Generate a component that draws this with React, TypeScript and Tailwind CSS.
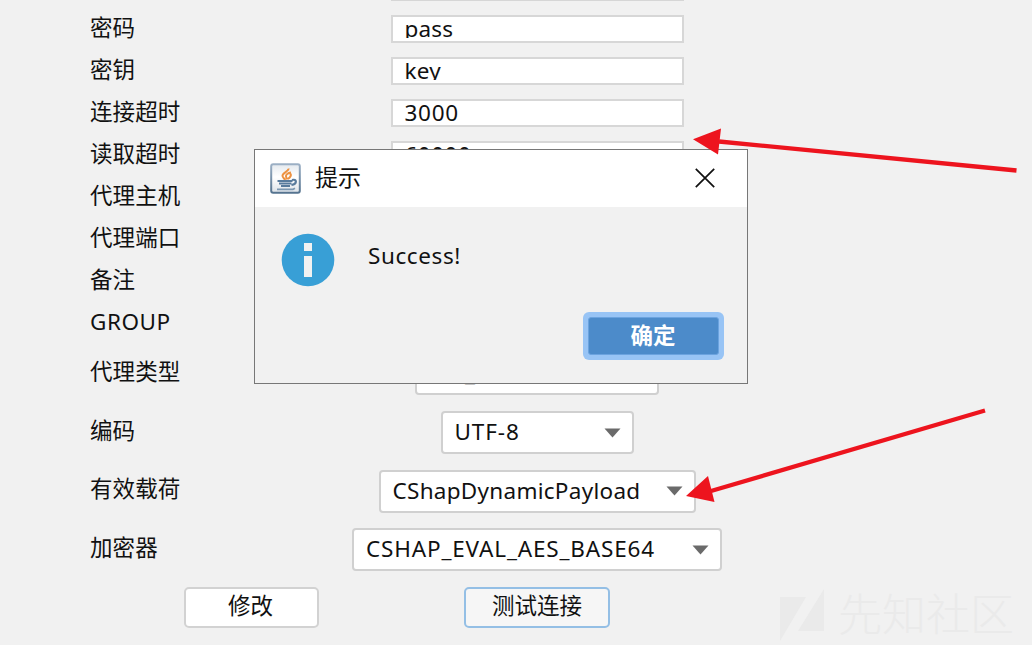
import type { ReactNode } from "react";

const textFields = [
  { label: "密码", value: "pass", spacing: "tracking-[0.2px]" },
  { label: "密钥", value: "key", spacing: "tracking-[0.2px]" },
  { label: "连接超时", value: "3000", spacing: "tracking-[0.7px]" },
  { label: "读取超时", value: "60000", spacing: "tracking-[0.5px]" },
  { label: "代理主机", value: "", spacing: "" },
  { label: "代理端口", value: "", spacing: "" },
  { label: "备注", value: "", spacing: "" },
  { label: "GROUP", value: "", spacing: "" },
];

const selects = [
  { label: "代理类型", value: "NO_PROXY", row: "h-[59px]", width: "w-[244px]", spacing: "tracking-[0.7px]" },
  { label: "编码", value: "UTF-8", row: "h-[59px]", width: "w-[193px]", spacing: "tracking-[0.9px]" },
  { label: "有效载荷", value: "CShapDynamicPayload", row: "h-[58px]", width: "w-[317px]", spacing: "tracking-[0.28px]" },
  { label: "加密器", value: "CSHAP_EVAL_AES_BASE64", row: "h-[59px]", width: "w-[370px]", spacing: "tracking-[0.84px]" },
];

function Row({ label, height, labelClass, children }: { label: string; height: string; labelClass: string; children: ReactNode }) {
  return (
    <div className={`grid grid-cols-[252px_390px] items-center ${height}`}>
      <span className={`leading-[30px] ${labelClass}`}>{label}</span>
      <div className="flex justify-center">{children}</div>
    </div>
  );
}

function JavaIcon() {
  return (
    <svg width="31" height="31" viewBox="0 0 31 31">
      <defs>
        <linearGradient id="tile" x1="0" y1="0" x2="0" y2="1">
          <stop offset="0" stopColor="#e4e9ee" />
          <stop offset=".45" stopColor="#ffffff" />
          <stop offset="1" stopColor="#dce2e8" />
        </linearGradient>
        <linearGradient id="edge" x1="0" y1="0" x2="0" y2="1">
          <stop offset="0" stopColor="#9cb0c5" />
          <stop offset="1" stopColor="#55738f" />
        </linearGradient>
      </defs>
      <rect x="1.2" y="1.2" width="28.6" height="28.6" rx="2" fill="url(#tile)" stroke="url(#edge)" strokeWidth="2" />
      <path d="M18.500 5.500c.5 3-6.500 4.200-6 7.500.2 1.800 2.300 2.500 2.500 4M21 9.500c-3 .5-5.500 2-5 4 .3 1.200 1.200 1.500.4 3M20 10.500c2 1.500.2 4-2.300 5.500" fill="none" stroke="#ed9242" strokeWidth="2" />
      <path d="M7.500 18h15M9 20.500h12.500M11 23h9M22 17c5-1.500 5.500 4-.5 5" fill="none" stroke="#587b9d" strokeWidth="2.200" />
      <path d="M7 26.300h16l2-1" fill="none" stroke="#7c98b2" strokeWidth="1.800" />
    </svg>
  );
}

function Dialog() {
  return (
    <section className="absolute left-[254px] top-[149px] flex h-[235px] w-[494px] flex-col border border-[#777] bg-[#f1f1f1]">
      <header className="flex h-[57px] shrink-0 items-center bg-white pl-[15px] pr-[32px]">
        <JavaIcon />
        <h1 className="ml-[14px] flex-1 pb-[3px] text-[23px] leading-[30px]">提示</h1>
        <svg className="mb-[2px]" width="20" height="20" viewBox="0 0 20 20" stroke="#111" strokeWidth="1.700">
          <path d="M.8.800 19.200 19.200M19.200.800.800 19.200" />
        </svg>
      </header>
      <div className="flex flex-1 items-start pl-[26px] pt-[26px]">
        <svg width="54" height="54" viewBox="0 0 54 54">
          <circle cx="27" cy="27" r="26.300" fill="#389fd6" />
          <path fill="#f1f1f1" d="M23 10h8v8h-8zM23 23h8v21h-8z" />
        </svg>
        <p className="ml-[33px] mt-[8px] leading-[30px] tracking-[0.6px]">Success!</p>
      </div>
      <footer className="flex justify-end pb-[23px] pr-[23px]">
        <button className="flex h-[48px] w-[141px] items-center justify-center rounded-[6px] bg-[#98c4f5] p-[5px] font-bold text-white outline-none">
          <span className="flex h-full w-full items-center justify-center rounded-[3px] border border-[#6ba3df] bg-[#4c8bca] pr-px">确定</span>
        </button>
      </footer>
    </section>
  );
}

export default function App() {
  return (
    <main className="relative h-[645px] w-[1032px] overflow-hidden bg-[#f1f1f1] font-['Noto_Sans','Noto_Sans_CJK_SC',sans-serif] text-[22.500px] text-[#111]">
      <div className="flex flex-col pl-[90px]">
        <div className="flex h-[8px] w-[642px] items-start justify-center pl-[252px]">
          <div className="h-px w-[293px] bg-[#d6d6d6]" />
        </div>
        {textFields.map((field) => (
          <Row key={field.label} label={field.label} height="h-[42px]" labelClass={field.label === "GROUP" ? "pb-[2px] tracking-[0.5px]" : "pb-[2px] tracking-[0.1px]"}>
            <div className="h-[28px] w-[293px] border-2 border-[#d7d7d7] bg-white px-[11px] pt-[2px]">
              <div className={`flex h-[19px] items-center overflow-hidden pl-px leading-[30px] ${field.spacing}`}>
                <span>{field.value}</span>
              </div>
            </div>
          </Row>
        ))}
        {selects.map((select) => (
          <Row key={select.label} label={select.label} height={select.row} labelClass="pb-[4px] tracking-[0.1px]">
            <div className={`flex h-[43px] items-center justify-between rounded-[4px] border-2 border-[#d0d0d0] bg-white pl-[12px] pr-[11px] ${select.width}`}>
              <span className={`pb-[1px] leading-[30px] ${select.spacing}`}>{select.value}</span>
              <svg width="17" height="10" viewBox="0 0 17 10">
                <path d="M.5.500h16L8.500 9.500z" fill="#6a6a6a" />
              </svg>
            </div>
          </Row>
        ))}
        <div className="flex h-[56px] items-center pl-[94px]">
          <button className="h-[41px] w-[135px] rounded-[5px] border-2 border-[#d2d2d2] bg-white pb-[3px] pr-[2px] leading-[30px]">修改</button>
          <button className="ml-[145px] h-[41px] w-[146px] rounded-[5px] border-2 border-[#94bfe5] bg-[#f6f6f6] pb-[3px] leading-[30px]">测试连接</button>
        </div>
      </div>

      <div className="absolute left-[780px] top-[585px] flex items-center text-[#eaeaea]">
        <svg width="45" height="54" viewBox="0 0 45 54" fill="currentColor">
          <path d="M0 10h26L0 54zM44 2v42H18z" />
        </svg>
        <span className="ml-[13px] pb-[4px] font-['Noto_Sans_CJK_SC',sans-serif] text-[44px] font-light leading-[54px]">先知社区</span>
      </div>

      <Dialog />

      <svg className="absolute inset-0" width="1032" height="645" viewBox="0 0 1032 645">
        <g fill="#ed141e" stroke="#ed141e">
          <path d="M1016.500 170.500 719 141.500M985 410.500 711 491" strokeWidth="4.300" />
          <path stroke="none" d="M693 139.300 721 128.500 718 154.500zM686 496 708 476 714.500 502z" />
        </g>
      </svg>
    </main>
  );
}
